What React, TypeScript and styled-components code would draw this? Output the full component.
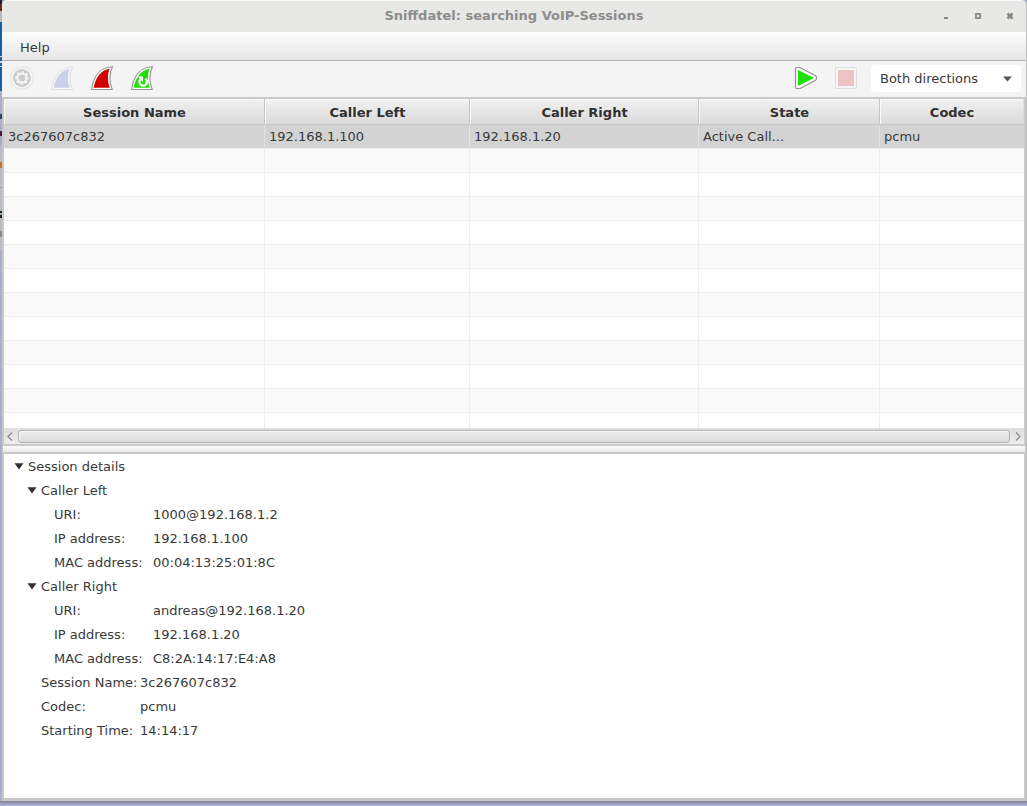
import React from 'react';
import styled, { createGlobalStyle } from 'styled-components';

const GlobalStyle = createGlobalStyle`
  * { box-sizing: border-box; }
  body { margin: 0; overflow: hidden; background: #a9b2cf; }
`;

const Desktop = styled.div`
  width: 1027px;
  height: 806px;
  display: flex;
  padding-bottom: 5px;
  background:
    linear-gradient(#7d839b, #a6aecb 80%) 0 801px / 100% 5px no-repeat,
    #a9b0ca;
  font: 13px 'DejaVu Sans', sans-serif;
  color: #393939;
`;

const BackgroundEdge = styled.div`
  width: 2px;
  background: linear-gradient(
    #222 0 4px, #6b2a1c 4px 11px, #b9b9b9 11px 22px, #15609d 22px 56px,
    #d5d5d5 56px 57px, #15609d 57px 61px, #d5d5d5 61px 63px, #15609d 63px 66px,
    #c9d6e4 66px 67px, #15609d 67px 91px, #aaaccb 91px 114px, #34435c 114px 119px,
    #aaaccb 119px 131px, #4b1745 131px 136px, #aaaccb 136px 146px, #b8bac4 146px 162px,
    #c67425 162px 168px, #b8bac4 168px 187px, #999dac 187px 188px, #b8bac4 188px 211px,
    #1a2630 211px 213px, #9aa 213px 215px, #222 215px 218px, #b8bac4 218px 231px,
    #8a8a8a 231px 237px, #b8bac4 237px 250px, #a9aecb 250px
  );
`;

const Window = styled.main`
  width: 1025px;
  height: 801px;
  display: flex;
  flex-direction: column;
  background: #c8c8c8;
  border-right: 1px solid #bebebe;
  border-radius: 5px 5px 0 0;
`;

const TitleBar = styled.header`
  height: 32px;
  display: flex;
  background: #e8e8e6;
  border-top: 1px solid #f6f6f5;
  border-radius: 5px 5px 0 0;
`;

const Title = styled.h1`
  flex: 1;
  margin: 0;
  padding-left: 97px;
  text-align: center;
  font-size: 13px;
  font-weight: bold;
  line-height: 29px;
  color: #8c8c8c;
`;

const WindowControls = styled.div`
  display: flex;
  padding-right: 7px;
  svg { display: block; }
`;

const MenuBar = styled.nav`
  height: 29px;
  padding-left: 18px;
  line-height: 31px;
  background: linear-gradient(#fdfdfd, #e5e5e5);
  border-bottom: 1px solid #b1b1b1;
`;

const ToolBar = styled.div`
  height: 36px;
  padding: 4px 5px 5px 8px;
  display: flex;
  background: #f4f4f4;
`;

const ToolButton = styled.span<{ $faded?: boolean; $width?: number }>`
  width: ${p => p.$width ?? 40}px;
  padding-top: 1px;
  opacity: ${p => (p.$faded ? 0.2 : 1)};
  svg { display: block; }
`;

const Spacer = styled.div`
  flex: 1;
`;

const Select = styled.div`
  width: 150px;
  height: 27px;
  padding: 0 9px;
  display: flex;
  align-items: center;
  justify-content: space-between;
  background: #fff;
  border-radius: 4px;
`;

const columns = '261px 205px 229px 181px 144px';

const Table = styled.section`
  height: 330px;
  margin: 1px 2px 0;
  border-top: 1px solid #c8c8c8;
  background: #fff;
  overflow: hidden;
`;

const HeaderRow = styled.div`
  display: grid;
  grid-template: 26px / ${columns};
  height: 26px;
`;

const HeaderCell = styled.div`
  padding-left: 1px;
  text-align: center;
  font-weight: bold;
  line-height: 27px;
  color: #303030;
  background: linear-gradient(#f1f1f1, #dadada);
  border-right: 1px solid #c5c5c5;
  border-bottom: 1px solid #c8c8c8;
  box-shadow: inset 1px 1px #fafafa;
  &:last-child { border-right-color: #dcdcdc; }
`;

const Row = styled.div<{ $selected?: boolean }>`
  display: grid;
  grid-template: 24px / ${columns};
  height: 24px;
  background: ${p => (p.$selected ? '#d3d3d3' : '#fff')};
  &:nth-child(odd) { background: #f9f9f9; }
`;

const Cell = styled.div<{ $selected?: boolean }>`
  padding-left: 4px;
  line-height: 24px;
  border-right: 1px solid ${p => (p.$selected ? '#e2e2e2' : '#ededed')};
  border-bottom: 1px solid #ededed;
  &:last-child { border-right: 0; }
`;

const ScrollBar = styled.div`
  height: 16px;
  margin: 0 2px;
  display: flex;
  align-items: center;
  background: linear-gradient(#dedede, #ececec);
  svg { display: block; flex: none; }
`;

const Thumb = styled.div`
  flex: 1;
  height: 13px;
  margin-top: 1px;
  border: 1px solid #b1b1b1;
  border-radius: 3px;
  background: linear-gradient(#ededed, #dbdbdb);
  box-shadow: inset 1px 1px #f8f8f8;
`;

const Splitter = styled.div`
  height: 6px;
  margin: 2px 1px;
  background: linear-gradient(#fcfcfc, #e8e8e8);
`;

const Details = styled.section`
  height: 344px;
  margin: 0 2px;
  background: #fff;
`;

const TreeRow = styled.div<{ $indent: number }>`
  height: 24px;
  padding-left: ${p => p.$indent}px;
  display: flex;
  align-items: center;
`;

const Label = styled.span<{ $width: number }>`
  width: ${p => p.$width}px;
  white-space: nowrap;
`;

const Disclosure = styled.svg`
  display: block;
  margin-right: 4px;
`;

function Branch({ indent, children }: { indent: number; children: React.ReactNode }) {
  return (
    <TreeRow $indent={indent}>
      <Disclosure width="10" height="8"><path d="M0.500 1.300h9L5 7.500z" fill="#303030" /></Disclosure>
      {children}
    </TreeRow>
  );
}

function Leaf({ indent, label, value, width = 99 }: { indent: number; label: string; value: string; width?: number }) {
  return (
    <TreeRow $indent={indent}>
      <Label $width={width}>{label}</Label>
      {value}
    </TreeRow>
  );
}

function Fin({ color, restart }: { color: string; restart?: boolean }) {
  return (
    <svg width="24" height="25" viewBox="0 0 24 25">
      <path d="M1.5 23.5C3.5 10 10.5 1 22.5.7C19 8 19.200 16 22.300 23.500Z" fill="#fff" stroke="#949494" strokeWidth="1.100" />
      <path d="M3.600 21.700C6 11 11 4 19.500 2.800C17.300 9 17.500 16 19.800 21.700Z" fill={color} />
      {restart && (
        <>
          <path d="M9.500 14.500C9 17.800 10.800 19.700 13.200 19.700C16.800 19.700 18 15.500 15.600 12.800" fill="none" stroke="#fff" strokeWidth="2.300" />
          <path d="M7.600 10.400H13V16L11.200 14.300L9.500 15.500L8.200 14.500L9.600 12.600Z" fill="#fff" />
        </>
      )}
    </svg>
  );
}

const sessions = [['3c267607c832', '192.168.1.100', '192.168.1.20', 'Active Call...', 'pcmu']];
const headings = ['Session Name', 'Caller Left', 'Caller Right', 'State', 'Codec'];
const rows = [...sessions, ...Array.from({ length: 12 }, () => ['', '', '', '', ''])];

export default function App() {
  return (
    <>
      <GlobalStyle />
      <Desktop>
        <BackgroundEdge />
        <Window>
          <TitleBar>
            <Title>Sniffdatel: searching VoIP-Sessions</Title>
            <WindowControls>
              <svg width="90" height="30" viewBox="0 0 90 30">
                <path d="M15 16h4v2h-4z" fill="#858585" />
                <path d="M47 13h4v4h-4z" fill="none" stroke="#909090" strokeWidth="2" />
                <path d="M78.500 12.500l5 5m0-5l-5 5" stroke="#858585" strokeWidth="2.500" />
              </svg>
            </WindowControls>
          </TitleBar>
          <MenuBar>Help</MenuBar>
          <ToolBar>
            <ToolButton $faded>
              <svg width="24" height="25" viewBox="0 0 24 25">
                <circle cx="12" cy="12" r="11.3" fill="#fff" stroke="#999" />
                <circle cx="12" cy="12" r="9" fill="#333" />
                <circle cx="12" cy="12" r="4.500" fill="none" stroke="#fff" strokeWidth="2.200" />
                <circle cx="12" cy="12" r="6" fill="none" stroke="#fff" strokeWidth="1.600" strokeDasharray="2.356" strokeDashoffset="1.178" />
              </svg>
            </ToolButton>
            <ToolButton $faded><Fin color="#2a43c5" /></ToolButton>
            <ToolButton><Fin color="#d10000" /></ToolButton>
            <ToolButton><Fin color="#23df08" restart /></ToolButton>
            <Spacer />
            <ToolButton>
              <svg width="24" height="25" viewBox="0 0 24 25">
                <path d="M1.500 2.500Q1.500 1.500 3 1.500H6L21.500 9.700Q23.500 12 21.500 14.300L6 22.500H3Q1.500 22.500 1.500 21.500Z" fill="#fff" stroke="#929292" strokeWidth="1.200" />
                <path d="M4 4L20.200 12L4 20Z" fill="#23df08" />
              </svg>
            </ToolButton>
            <ToolButton $faded $width={37}>
              <svg width="24" height="25" viewBox="0 0 24 25">
                <path d="M1.500 1.500h21v21h-21z" fill="#fff" stroke="#8b8b8b" />
                <path d="M4 4h16v16H4z" fill="#d30000" />
              </svg>
            </ToolButton>
            <Select>
              Both directions
              <svg width="9" height="6"><path d="M0 .5h9L4.500 5.500z" fill="#555" /></svg>
            </Select>
          </ToolBar>
          <Table>
            <HeaderRow>{headings.map(h => <HeaderCell key={h}>{h}</HeaderCell>)}</HeaderRow>
            {rows.map((cells, i) => (
              <Row key={i} $selected={i === 0}>
                {cells.map((text, j) => <Cell key={j} $selected={i === 0}>{text}</Cell>)}
              </Row>
            ))}
          </Table>
          <ScrollBar>
            <svg width="14" height="16"><path d="M8 4.500L4 8.500L8 12.500" fill="none" stroke="#888" strokeWidth="1.200" /></svg>
            <Thumb />
            <svg width="14" height="16"><path d="M6 4.500L10 8.500L6 12.500" fill="none" stroke="#888" strokeWidth="1.200" /></svg>
          </ScrollBar>
          <Splitter />
          <Details>
            <Branch indent={10}>Session details</Branch>
            <Branch indent={23}>Caller Left</Branch>
            <Leaf indent={50} label="URI:" value="1000@192.168.1.2" />
            <Leaf indent={50} label="IP address:" value="192.168.1.100" />
            <Leaf indent={50} label="MAC address:" value="00:04:13:25:01:8C" />
            <Branch indent={23}>Caller Right</Branch>
            <Leaf indent={50} label="URI:" value="andreas@192.168.1.20" />
            <Leaf indent={50} label="IP address:" value="192.168.1.20" />
            <Leaf indent={50} label="MAC address:" value="C8:2A:14:17:E4:A8" />
            <Leaf indent={37} label="Session Name:" value="3c267607c832" />
            <Leaf indent={37} label="Codec:" value="pcmu" />
            <Leaf indent={37} label="Starting Time:" value="14:14:17" />
          </Details>
        </Window>
      </Desktop>
    </>
  );
}
